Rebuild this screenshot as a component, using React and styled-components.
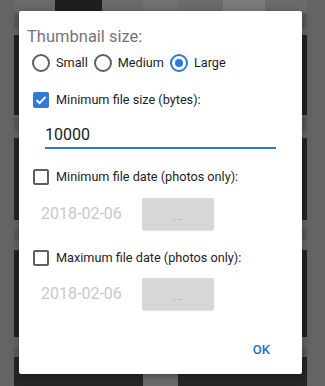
import React from "react";
import styled, { createGlobalStyle } from "styled-components";

const Global = createGlobalStyle`
  html, body { margin: 0; padding: 0; }
  body {
    width: 325px;
    height: 386px;
    overflow: hidden;
    background: #646464;
    font-family: Roboto, "Noto Sans", "Liberation Sans", sans-serif;
  }
`;

const Screen = styled.div`
  position: relative;
  width: 325px;
  height: 386px;
  overflow: hidden;
  background: #646464;
`;

const Backdrop = styled.div`
  display: flex;
  flex-direction: column;
  height: 100%;
  box-sizing: border-box;
  padding: 0 18px 0 14px;
`;

const Band = styled.div`
  display: flex;
  flex: none;
  height: ${(p) => p.$h}px;
`;

const Cell = styled.div`
  flex: ${(p) => (p.$w ? "none" : "1")};
  width: ${(p) => (p.$w ? `${p.$w}px` : "auto")};
  background: ${(p) => p.$c};
`;

const Dialog = styled.div`
  position: absolute;
  left: 19px;
  top: 11px;
  width: 283px;
  height: 363px;
  box-sizing: border-box;
  padding-top: 16px;
  background: #ffffff;
  border-radius: 2px;
  box-shadow: 0 2px 8px rgba(0, 0, 0, 0.35);
  display: flex;
  flex-direction: column;
`;

const Title = styled.div`
  padding-left: 8px;
  font-size: 16.5px;
  line-height: 20px;
  color: #757575;
`;

const RadioRow = styled.div`
  display: flex;
  align-items: center;
  gap: 6px;
  height: 24px;
  margin-top: 4px;
  padding-left: 13px;
`;

const RadioItem = styled.div`
  display: flex;
  align-items: center;
  gap: 6px;
`;

const Circle = styled.span`
  width: 18px;
  height: 18px;
  box-sizing: border-box;
  border-radius: 50%;
  border: 2px solid ${(p) => (p.$on ? "#2a79d5" : "#5f5f5f")};
  display: flex;
  align-items: center;
  justify-content: center;
  &::after {
    content: "";
    display: ${(p) => (p.$on ? "block" : "none")};
    width: 8px;
    height: 8px;
    border-radius: 50%;
    background: #2a79d5;
  }
`;

const Label = styled.span`
  font-size: 12.7px;
  line-height: 16px;
  color: #1e1e1e;
`;

const CheckRow = styled.div`
  display: flex;
  align-items: center;
  gap: 7px;
  height: 24px;
  margin-top: ${(p) => p.$mt}px;
  padding-left: 14px;
`;

const Box = styled.span`
  display: flex;
  align-items: center;
  justify-content: center;
  width: 16px;
  height: 16px;
  box-sizing: border-box;
  border-radius: 2px;
  border: ${(p) => (p.$on ? "none" : "2px solid #5f5f5f")};
  background: ${(p) => (p.$on ? "#2f7bd6" : "transparent")};
`;

const Field = styled.div`
  margin: 13px 26px 0 26px;
  padding-bottom: 2px;
  border-bottom: 2px solid #2b78d4;
  font-size: 16px;
  line-height: 20px;
  color: #212121;
`;

const DateRow = styled.div`
  display: grid;
  grid-template-columns: 101px 72px;
  align-items: center;
  height: 32px;
  margin-top: ${(p) => p.$mt}px;
  padding-left: 22px;
`;

const DateText = styled.span`
  font-size: 16px;
  line-height: 20px;
  color: #c9c9c9;
`;

const PickButton = styled.div`
  height: 32px;
  border-radius: 2px;
  background: #d7d7d7;
  box-shadow: 0 0.5px 1px rgba(0, 0, 0, 0.12);
  display: flex;
  align-items: center;
  justify-content: center;
  padding-top: 4px;
  box-sizing: border-box;
  font-size: 10px;
  letter-spacing: 0.5px;
  color: #999999;
`;

const Footer = styled.div`
  margin-top: auto;
  margin-bottom: 6.5px;
  height: 36px;
  display: flex;
  align-items: center;
  justify-content: flex-end;
  padding-right: 32px;
`;

const OkButton = styled.span`
  font-size: 13px;
  font-weight: 500;
  color: #1a6fd1;
`;

const bands = [
  { h: 13, cells: [[41, "#6a6a6a"], [47, "#1e1e1e"], [41, "#6b6b6b"], [35, "#717171"], [45, "#6c6c6c"], [42, "#7b7b7b"], [0, "#6b6b6b"]] },
  { h: 15, cells: [[0, "#5a5a5a"]] },
  { h: 7, cells: [[0, "#646464"]] },
  { h: 80, cells: [[0, "#222222"]] },
  { h: 3, cells: [[0, "#646464"]] },
  { h: 12, cells: [[0, "#5a5a5a"]] },
  { h: 8, cells: [[0, "#646464"]] },
  { h: 82, cells: [[0, "#242424"]] },
  { h: 10, cells: [[0, "#646464"]] },
  { h: 10, cells: [[0, "#5a5a5a"]] },
  { h: 10, cells: [[0, "#646464"]] },
  { h: 87, cells: [[0, "#222222"]] },
  { h: 10, cells: [[0, "#646464"]] },
  { h: 10, cells: [[0, "#5a5a5a"]] },
  { h: 29, cells: [[129, "#262626"], [35, "#6a6a6a"], [0, "#262626"]] },
];

const Check = () => (
  <svg width="12" height="12" viewBox="0 0 12 12" fill="none">
    <path d="M1.6 6.2 L4.6 9.1 L10.5 2.9" stroke="#ffffff" strokeWidth="2" />
  </svg>
);

export default function App() {
  return (
    <Screen>
      <Global />
      <Backdrop>
        {bands.map((b, i) => (
          <Band key={i} $h={b.h}>
            {b.cells.map(([w, c], j) => (
              <Cell key={j} $w={w} $c={c} />
            ))}
          </Band>
        ))}
      </Backdrop>
      <Dialog>
        <Title>Thumbnail size:</Title>
        <RadioRow>
          <RadioItem><Circle /><Label>Small</Label></RadioItem>
          <RadioItem><Circle /><Label>Medium</Label></RadioItem>
          <RadioItem><Circle $on /><Label>Large</Label></RadioItem>
        </RadioRow>
        <CheckRow $mt={13}>
          <Box $on><Check /></Box>
          <Label>Minimum file size (bytes):</Label>
        </CheckRow>
        <Field>10000</Field>
        <CheckRow $mt={16}>
          <Box />
          <Label>Minimum file date (photos only):</Label>
        </CheckRow>
        <DateRow $mt={9}>
          <DateText>2018-02-06</DateText>
          <PickButton>...</PickButton>
        </DateRow>
        <CheckRow $mt={16}>
          <Box />
          <Label>Maximum file date (photos only):</Label>
        </CheckRow>
        <DateRow $mt={8}>
          <DateText>2018-02-06</DateText>
          <PickButton>...</PickButton>
        </DateRow>
        <Footer>
          <OkButton>OK</OkButton>
        </Footer>
      </Dialog>
    </Screen>
  );
}
